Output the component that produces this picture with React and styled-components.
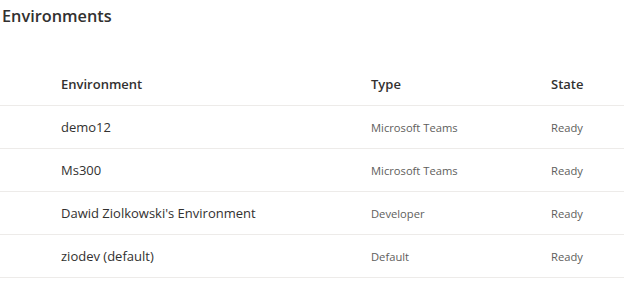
import React from "react";
import styled, { createGlobalStyle } from "styled-components";

const Global = createGlobalStyle`
  html, body { margin: 0; padding: 0; background: #ffffff; }
  body { font-family: "Open Sans", "Noto Sans", sans-serif; color: #323130; }
`;

const Page = styled.div`
  width: 624px;
  height: 286px;
  overflow: hidden;
  background: #fff;
`;

const Title = styled.h1`
  margin: 0;
  padding: 5px 0 0 2px;
  height: 63px;
  box-sizing: border-box;
  font-size: 16.3px;
  font-weight: 600;
  line-height: 22px;
  color: #323130;
`;

const Row = styled.div`
  display: grid;
  grid-template-columns: 310px 180px 1fr;
  align-items: center;
  height: 43px;
  padding-left: 61px;
  box-sizing: border-box;
  border-bottom: 1px solid #edebe9;
`;

const HeadCell = styled.div`
  font-size: 13px;
  font-weight: 600;
  color: #323130;
`;

const Cell = styled.div`
  font-size: ${(p) => (p.$muted ? "11.2px" : "13px")};
  color: ${(p) => (p.$muted ? "#605e5c" : "#323130")};
  white-space: nowrap;
`;

const rows = [
  ["demo12", "Microsoft Teams", "Ready"],
  ["Ms300", "Microsoft Teams", "Ready"],
  ["Dawid Ziolkowski's Environment", "Developer", "Ready"],
  ["ziodev (default)", "Default", "Ready"],
];

export default function App() {
  return (
    <Page>
      <Global />
      <Title>Environments</Title>
      <Row>
        <HeadCell>Environment</HeadCell>
        <HeadCell>Type</HeadCell>
        <HeadCell>State</HeadCell>
      </Row>
      {rows.map((r) => (
        <Row key={r[0]}>
          <Cell>{r[0]}</Cell>
          <Cell $muted>{r[1]}</Cell>
          <Cell $muted>{r[2]}</Cell>
        </Row>
      ))}
    </Page>
  );
}
